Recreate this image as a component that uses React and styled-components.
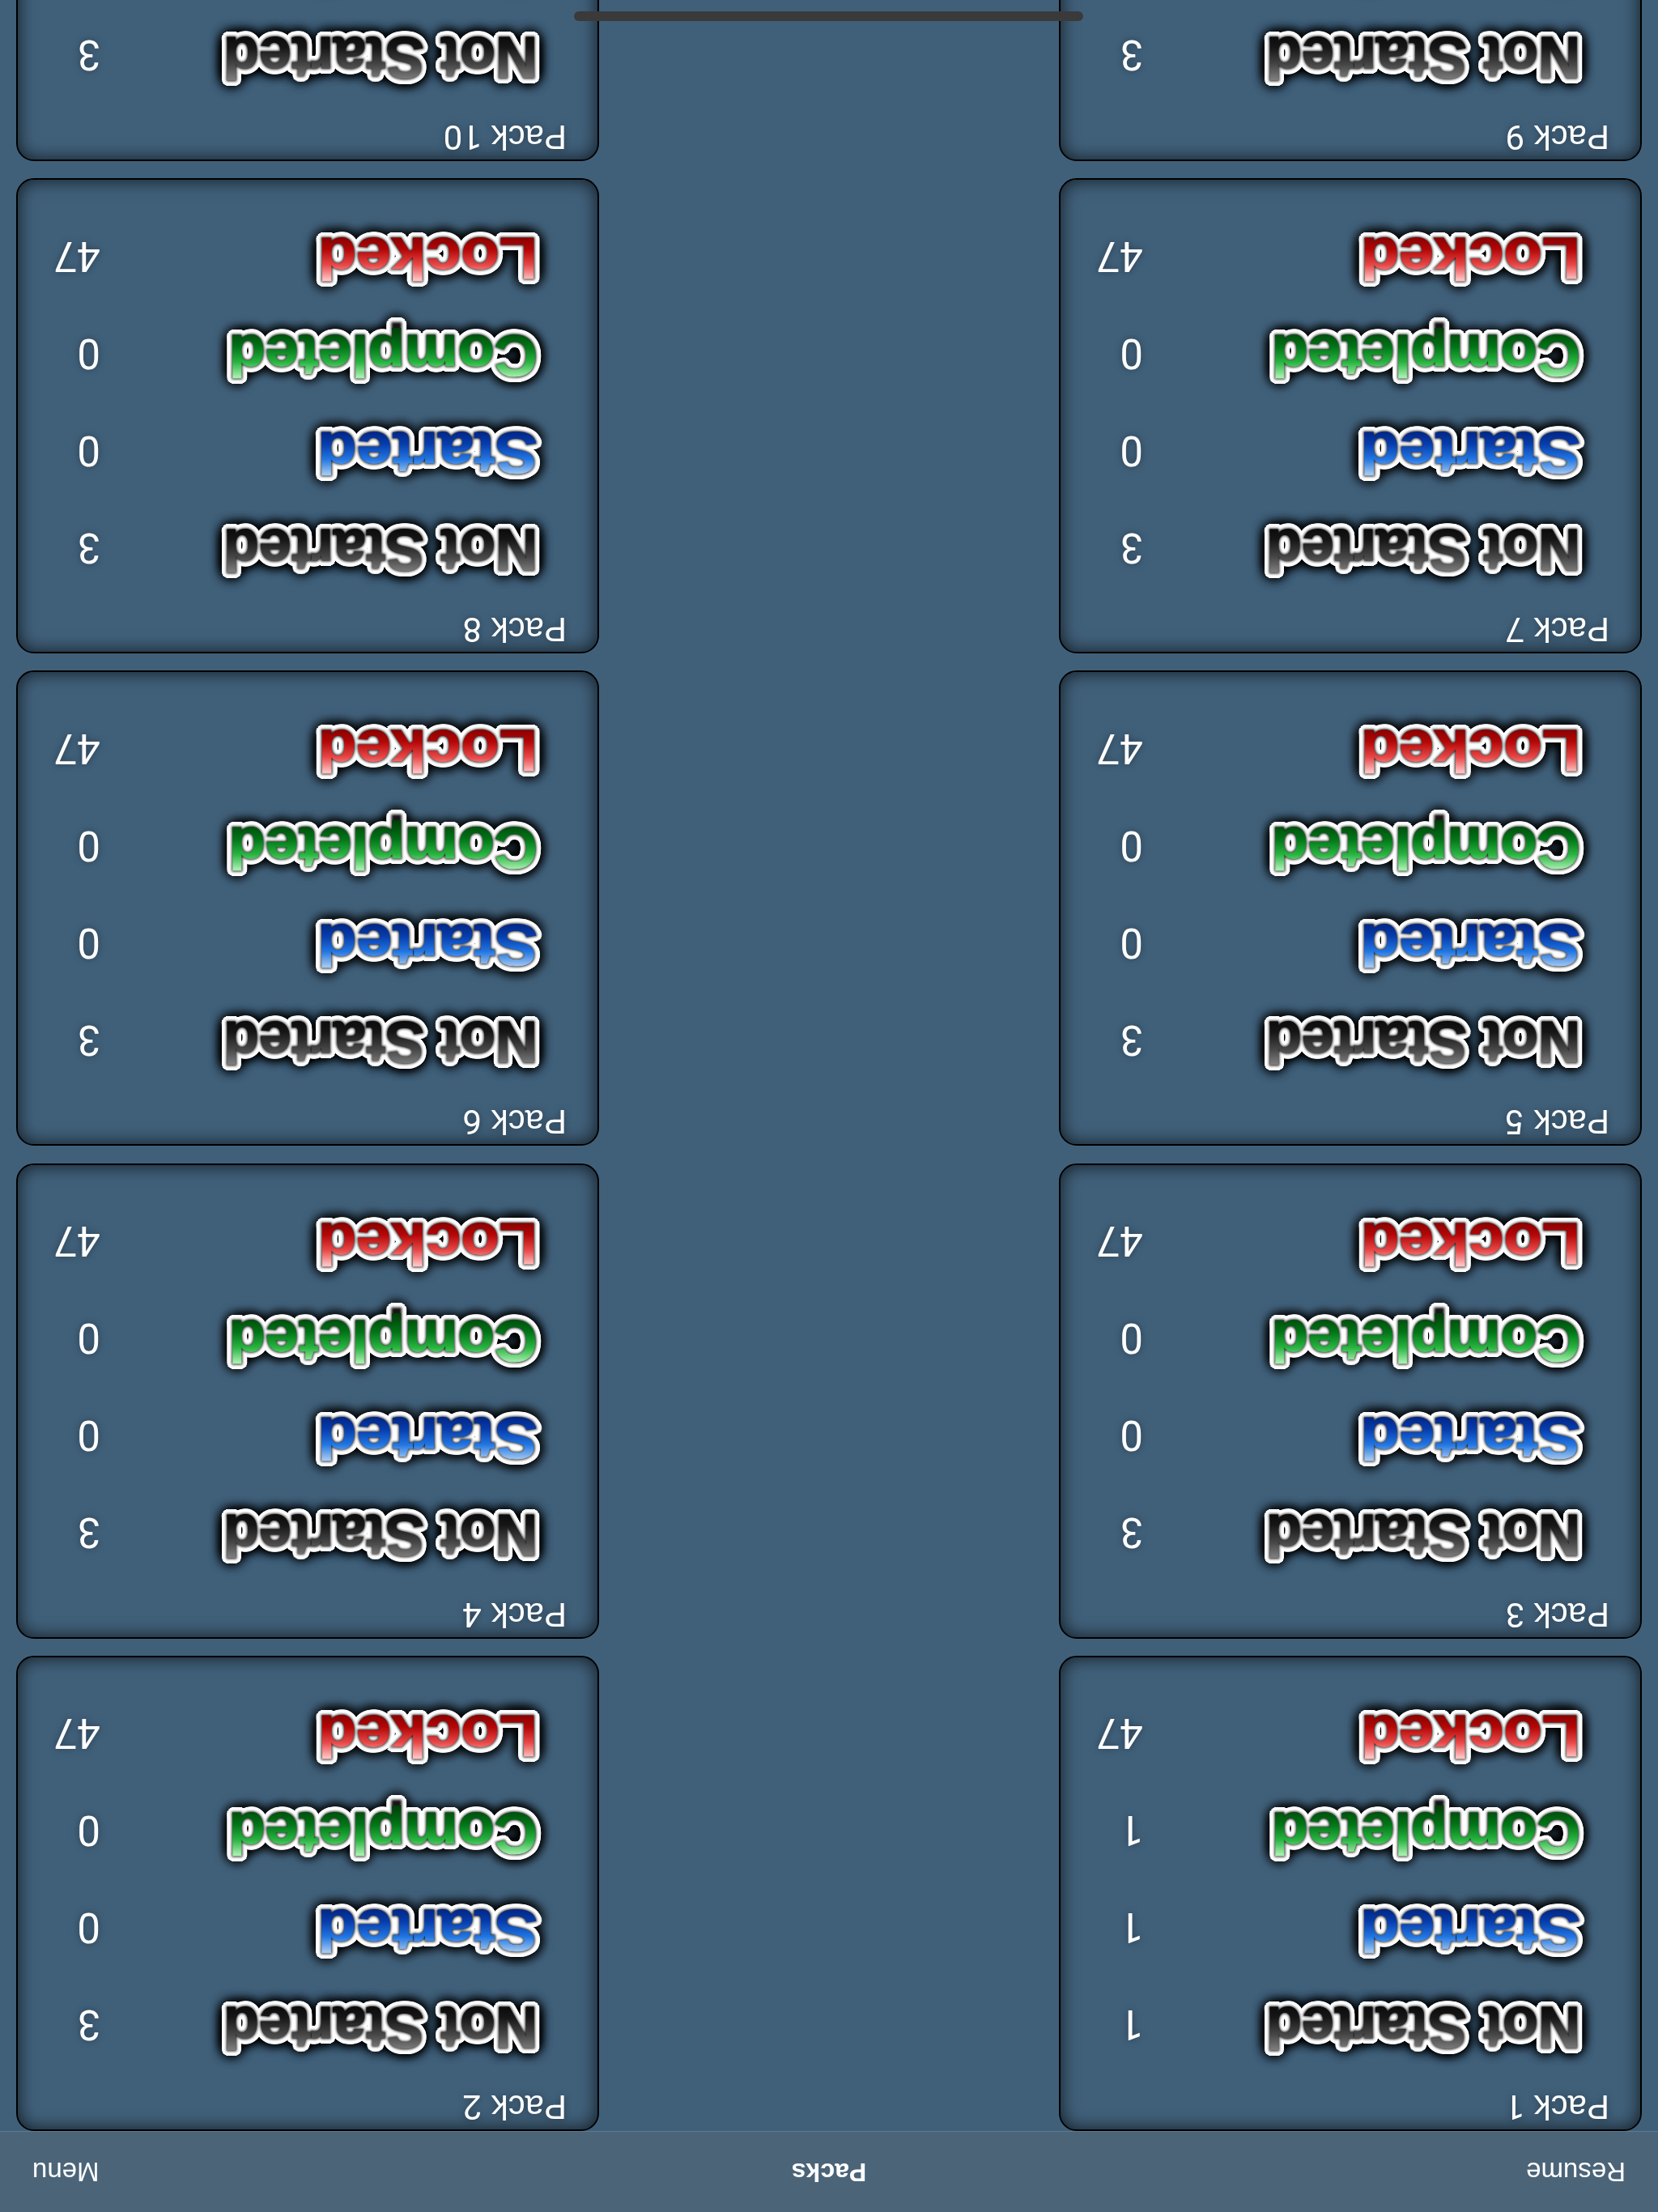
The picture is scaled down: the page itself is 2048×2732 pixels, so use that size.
import styled, {createGlobalStyle} from "styled-components";

const packs = [
  {id: 1, notStarted: 1, started: 1, completed: 1, locked: 47},
  {id: 2, notStarted: 3, started: 0, completed: 0, locked: 47},
  {id: 3, notStarted: 3, started: 0, completed: 0, locked: 47},
  {id: 4, notStarted: 3, started: 0, completed: 0, locked: 47},
  {id: 5, notStarted: 3, started: 0, completed: 0, locked: 47},
  {id: 6, notStarted: 3, started: 0, completed: 0, locked: 47},
  {id: 7, notStarted: 3, started: 0, completed: 0, locked: 47},
  {id: 8, notStarted: 3, started: 0, completed: 0, locked: 47},
  {id: 9, notStarted: 3, started: 0, completed: 0, locked: 47},
  {id: 10, notStarted: 3, started: 0, completed: 0, locked: 47},
];

const gradients = {
  gray: "linear-gradient(#7c7c7c 5%, #484848 32%, #161616 66%, #050505 100%)",
  blue: "linear-gradient(#a0c6f0 6%, #2276e2 34%, #063cac 64%, #001a70 100%)",
  green: "linear-gradient(#a4eeac 6%, #28b440 34%, #007416 64%, #003c08 100%)",
  red: "linear-gradient(#ffc0c0 6%, #e84848 34%, #b40606 64%, #700000 100%)",
};

// round white outline, built from zero-blur shadows around the glyph
const outline = Array.from({length: 24}, (_, i) => {
  const a = (i / 24) * Math.PI * 2;
  return `${(Math.cos(a) * 7).toFixed(2)}px ${(Math.sin(a) * 7).toFixed(2)}px 0 #fff`;
}).join(", ");

const glow = Array.from({length: 12}, (_, i) => {
  const a = (i / 12) * Math.PI * 2;
  return `${(Math.cos(a) * 8).toFixed(2)}px ${(Math.sin(a) * 8).toFixed(2)}px 14px rgba(0, 0, 0, 0.85)`;
}).join(", ");

const GlobalStyle = createGlobalStyle`
  html, body {
    margin: 0;
    padding: 0;
    background: #40607a;
  }
`;

const Screen = styled.div`
  position: relative;
  width: 2048px;
  height: 2732px;
  overflow: hidden;
  transform: rotate(180deg);
  background: #40607a;
  font-family: "Liberation Sans", Arial, sans-serif;
  color: #fff;
  display: flex;
  flex-direction: column;
`;

const TabBar = styled.header`
  flex: none;
  height: 100px;
  box-sizing: border-box;
  padding: 0 40px;
  display: grid;
  grid-template-columns: 1fr auto 1fr;
  align-items: center;
  background: #4b6478;
  border-bottom: 1px solid #5d7a90;
  font-size: 33px;
`;

const TabLink = styled.span`
  justify-self: ${props => (props.$end ? "end" : "start")};
`;

const TabTitle = styled.span`
  font-size: 32px;
  font-weight: 700;
`;

const PackGrid = styled.main`
  display: grid;
  grid-template-columns: 720px 720px;
  justify-content: space-between;
  grid-auto-rows: 587px;
  row-gap: 21.3px;
  padding: 0 20px;
`;

const Card = styled.article`
  box-sizing: border-box;
  border: 2px solid #000;
  border-radius: 22px;
  box-shadow: inset 0 0 22px rgba(0, 0, 0, 0.75);
  padding: 6px 0 0 38px;
`;

const PackName = styled.div`
  font-size: 42px;
  line-height: 44px;
  text-shadow: 0 0 10px rgba(0, 0, 0, 0.4);
`;

const Digits = styled.span`
  font-family: Roboto, "Liberation Sans", sans-serif;
`;

const StatList = styled.div`
  margin-top: 16px;
  display: grid;
  grid-auto-rows: 120px;
`;

const StatRow = styled.div`
  display: grid;
  grid-template-columns: 540px auto;
  align-items: center;
  padding-left: 36px;
`;

const Label = styled.span`
  position: relative;
  isolation: isolate;
  justify-self: start;
  font-size: 72px;
  line-height: 84px;
  font-weight: 700;
  transform: scaleX(${props => props.$stretch});
  transform-origin: 0 50%;

  &::before,
  &::after {
    content: attr(data-label);
    position: absolute;
    left: 0;
    top: 0;
    z-index: -1;
    white-space: nowrap;
  }

  &::before {
    color: #fff;
    text-shadow: ${outline}, ${glow};
  }

  &::after {
    color: rgba(0, 0, 0, 0.9);
    -webkit-text-stroke: 3px rgba(0, 0, 0, 0.75);
    filter: blur(1.5px);
  }
`;

const LabelFill = styled.span`
  white-space: nowrap;
  color: transparent;
  -webkit-text-stroke: 1px transparent;
  background: ${props => gradients[props.$tone]};
  background-position: 0 10px;
  background-size: 100% 64px;
  background-repeat: no-repeat;
  -webkit-background-clip: text;
  background-clip: text;
`;

const Count = styled(Digits)`
  margin-top: 6px;
  font-size: 51px;
  text-shadow: 0 0 10px rgba(0, 0, 0, 0.4);
`;

const HomeIndicator = styled.div`
  position: absolute;
  left: 50%;
  bottom: 14px;
  width: 629px;
  height: 12px;
  margin-left: -314px;
  border-radius: 6px;
  background: #3a3a3a;
`;

function Stat({label, tone, stretch, value}) {
  return (
    <StatRow>
      <Label data-label={label} $stretch={stretch}>
        <LabelFill $tone={tone}>{label}</LabelFill>
      </Label>
      <Count>{value}</Count>
    </StatRow>
  );
}

export default function App() {
  return (
    <>
      <GlobalStyle />
      <Screen>
        <TabBar>
          <TabLink>Resume</TabLink>
          <TabTitle>Packs</TabTitle>
          <TabLink $end>Menu</TabLink>
        </TabBar>
        <PackGrid>
          {packs.map(pack => (
            <Card key={pack.id}>
              <PackName>
                Pack <Digits>{pack.id}</Digits>
              </PackName>
              <StatList>
                <Stat label="Not Started" tone="gray" stretch={1.0} value={pack.notStarted} />
                <Stat label="Started" tone="blue" stretch={1.095} value={pack.started} />
                <Stat label="Completed" tone="green" stretch={1.025} value={pack.completed} />
                <Stat label="Locked" tone="red" stretch={1.075} value={pack.locked} />
              </StatList>
            </Card>
          ))}
        </PackGrid>
        <HomeIndicator />
      </Screen>
    </>
  );
}
